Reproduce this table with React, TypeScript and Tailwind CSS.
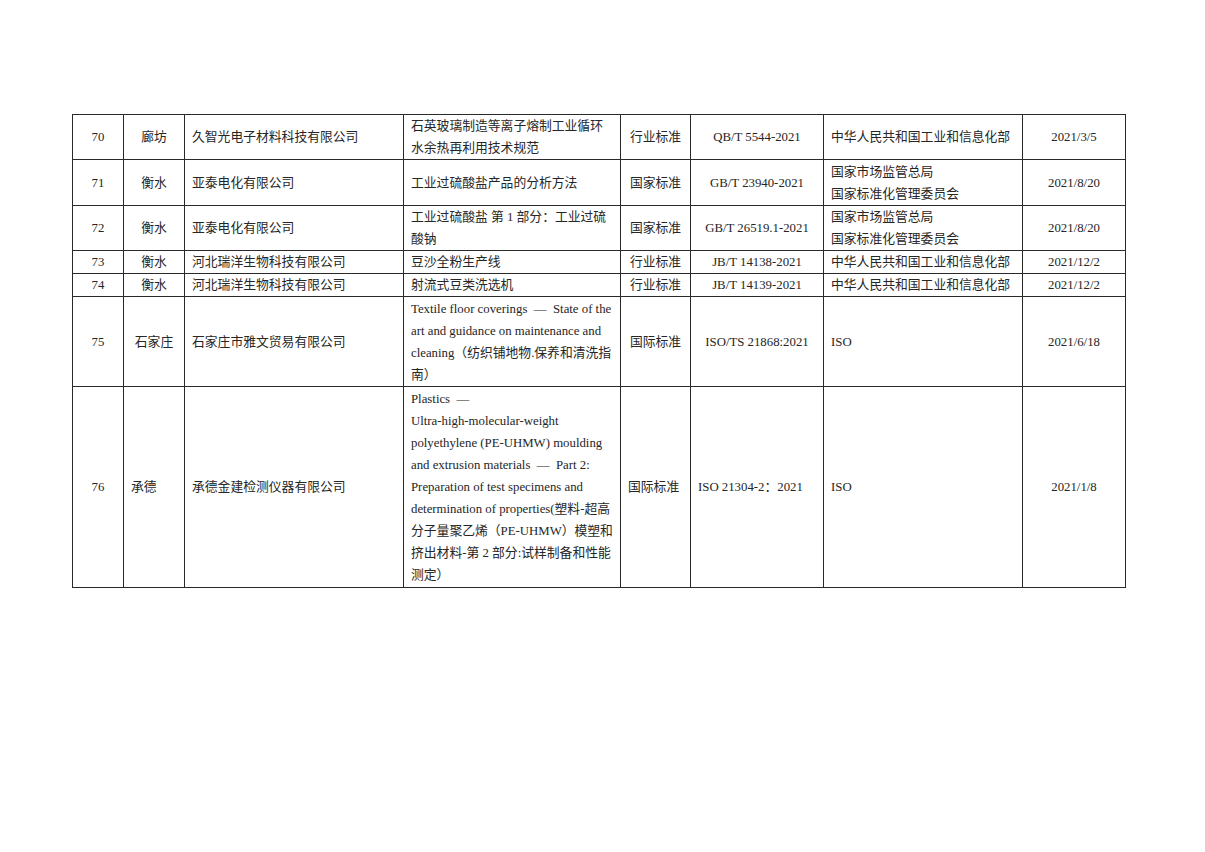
import React from "react";

type Cell = { lines: string[]; align: "c" | "l" };
type Row = { h: string; cells: Cell[] };

const c = (...lines: string[]): Cell => ({ lines, align: "c" });
const l = (...lines: string[]): Cell => ({ lines, align: "l" });

const rows: Row[] = [
  {
    h: "h-[45px]",
    cells: [
      c("70"),
      c("廊坊"),
      l("久智光电子材料科技有限公司"),
      l("石英玻璃制造等离子熔制工业循环", "水余热再利用技术规范"),
      c("行业标准"),
      c("QB/T 5544-2021"),
      l("中华人民共和国工业和信息化部"),
      c("2021/3/5"),
    ],
  },
  {
    h: "h-[46px]",
    cells: [
      c("71"),
      c("衡水"),
      l("亚泰电化有限公司"),
      l("工业过硫酸盐产品的分析方法"),
      c("国家标准"),
      c("GB/T 23940-2021"),
      l("国家市场监管总局", "国家标准化管理委员会"),
      c("2021/8/20"),
    ],
  },
  {
    h: "h-[45px]",
    cells: [
      c("72"),
      c("衡水"),
      l("亚泰电化有限公司"),
      l("工业过硫酸盐 第 1 部分：工业过硫", "酸钠"),
      c("国家标准"),
      c("GB/T 26519.1-2021"),
      l("国家市场监管总局", "国家标准化管理委员会"),
      c("2021/8/20"),
    ],
  },
  {
    h: "h-[23px]",
    cells: [
      c("73"),
      c("衡水"),
      l("河北瑞洋生物科技有限公司"),
      l("豆沙全粉生产线"),
      c("行业标准"),
      c("JB/T 14138-2021"),
      l("中华人民共和国工业和信息化部"),
      c("2021/12/2"),
    ],
  },
  {
    h: "h-[23px]",
    cells: [
      c("74"),
      c("衡水"),
      l("河北瑞洋生物科技有限公司"),
      l("射流式豆类洗选机"),
      c("行业标准"),
      c("JB/T 14139-2021"),
      l("中华人民共和国工业和信息化部"),
      c("2021/12/2"),
    ],
  },
  {
    h: "h-[90px]",
    cells: [
      c("75"),
      c("石家庄"),
      l("石家庄市雅文贸易有限公司"),
      l(
        "Textile floor coverings  —  State of the",
        "art and guidance on maintenance and",
        "cleaning（纺织铺地物.保养和清洗指",
        "南）"
      ),
      c("国际标准"),
      c("ISO/TS 21868:2021"),
      l("ISO"),
      c("2021/6/18"),
    ],
  },
  {
    h: "h-[201px]",
    cells: [
      c("76"),
      l("承德"),
      l("承德金建检测仪器有限公司"),
      l(
        "Plastics  —",
        "Ultra-high-molecular-weight",
        "polyethylene (PE-UHMW) moulding",
        "and extrusion materials  —  Part 2:",
        "Preparation of test specimens and",
        "determination of properties(塑料-超高",
        "分子量聚乙烯（PE-UHMW）模塑和",
        "挤出材料-第 2 部分:试样制备和性能",
        "测定）"
      ),
      l("国际标准"),
      l("ISO 21304-2：2021"),
      l("ISO"),
      c("2021/1/8"),
    ],
  },
];

export default function App() {
  return (
    <div className="w-[1205px] h-[852px] bg-white pt-[114px] pl-[72px]">
      <table className="w-[1053px] table-fixed border-collapse text-[12.8px] leading-[22px] text-[#262626] font-['Liberation_Serif','Noto_Sans_CJK_SC',serif]">
        <colgroup>
          <col className="w-[51px]" />
          <col className="w-[61px]" />
          <col className="w-[219px]" />
          <col className="w-[217px]" />
          <col className="w-[70px]" />
          <col className="w-[133px]" />
          <col className="w-[199px]" />
          <col className="w-[103px]" />
        </colgroup>
        <tbody>
          {rows.map((r, ri) => (
            <tr key={ri} className={r.h}>
              {r.cells.map((cell, ci) => (
                <td
                  key={ci}
                  className={
                    cell.align === "c"
                      ? "border border-[#2a2a2a] align-middle p-0 whitespace-pre overflow-hidden text-center"
                      : "border border-[#2a2a2a] align-middle p-0 whitespace-pre overflow-hidden text-left pl-[7px]"
                  }
                >
                  {cell.lines.map((t, ti) => (
                    <div key={ti}>{t}</div>
                  ))}
                </td>
              ))}
            </tr>
          ))}
        </tbody>
      </table>
    </div>
  );
}
